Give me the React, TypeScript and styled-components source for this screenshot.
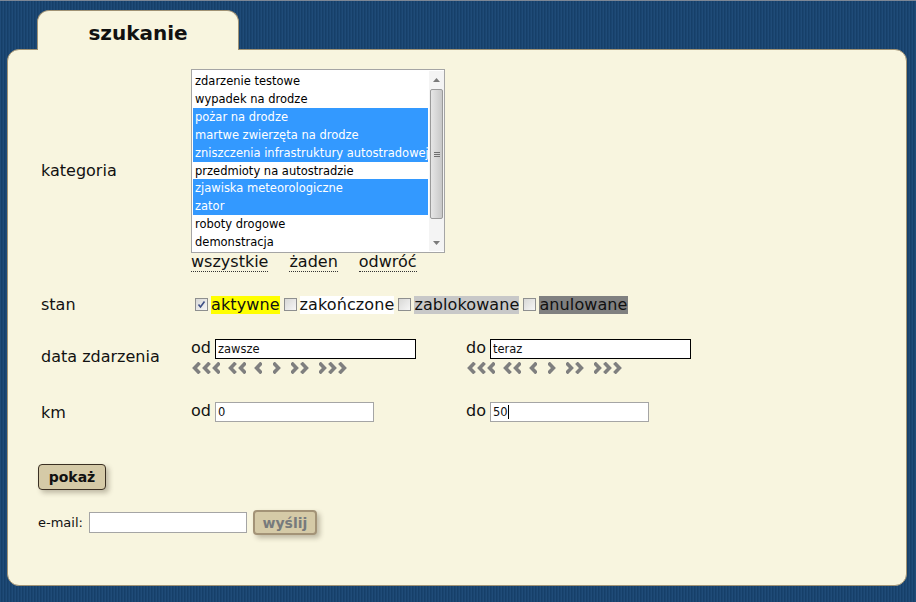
import React from 'react';
import styled, { createGlobalStyle } from 'styled-components';

const Global = createGlobalStyle`
  html, body { margin: 0; padding: 0; }
  body {
    width: 916px;
    height: 602px;
    overflow: hidden;
    background-color: #1a4570;
    background-image:
      linear-gradient(#7d8796, #7d8796),
      repeating-linear-gradient(90deg, #1f4b78 0px, #1f4b78 1px, #163f69 1px, #163f69 2px, #1a4570 2px, #1a4570 3px);
    background-size: 100% 1px, auto;
    background-repeat: no-repeat, repeat;
    font-family: "DejaVu Sans", Verdana, sans-serif;
    color: #111;
  }
`;

const Page = styled.div`
  padding: 10px 9px 0 7px;
`;

const Tab = styled.div`
  position: relative;
  z-index: 1;
  margin-left: 30px;
  margin-bottom: -1px;
  width: 200px;
  height: 39px;
  box-sizing: content-box;
  border: 1px solid #a09274;
  border-bottom: none;
  border-radius: 12px 12px 0 0;
  background: #f8f5df;
  text-align: center;
  font-weight: bold;
  font-size: 20px;
  line-height: 26px;
  & > span { display: block; padding-top: 9px; }
`;

const Panel = styled.div`
  width: 900px;
  height: 537px;
  box-sizing: border-box;
  border: 1px solid #a09274;
  border-radius: 12px;
  background: #f8f5df;
  display: flex;
  flex-direction: column;
  padding-top: 19px;
`;

const Row = styled.div<{ $mt: number }>`
  display: grid;
  grid-template-columns: 150px 1fr;
  align-items: center;
  padding-left: 33px;
  margin-top: ${p => p.$mt}px;
`;

const Label = styled.div`
  font-size: 16px;
  line-height: 19px;
`;

const Controls = styled.div`
  display: flex;
  flex-direction: column;
  align-items: flex-start;
`;

const ListBox = styled.div`
  width: 254px;
  height: 184px;
  box-sizing: border-box;
  border: 1px solid #a5a5a5;
  background: #fff;
  display: flex;
  padding: 1px 0 1px 1px;
`;

const Items = styled.div`
  width: 235px;
  display: flex;
  flex-direction: column;
  padding-top: 1px;
`;

const Item = styled.div<{ $sel?: boolean }>`
  height: 18px;
  line-height: 18px;
  font-size: 11.5px;
  padding-left: 2px;
  white-space: nowrap;
  overflow: hidden;
  background: ${p => (p.$sel ? '#3399ff' : 'transparent')};
  color: ${p => (p.$sel ? '#fff' : '#000')};
`;

const Scrollbar = styled.div`
  width: 17px;
  margin-left: 1px;
  display: flex;
  flex-direction: column;
  background: #f4f4f4;
`;

const ArrowBtn = styled.div`
  height: 17px;
  display: flex;
  align-items: center;
  justify-content: center;
`;

const Track = styled.div`
  flex: 1;
  display: flex;
  flex-direction: column;
  align-items: center;
  padding-top: 1px;
`;

const Thumb = styled.div`
  width: 13px;
  height: 130px;
  box-sizing: border-box;
  border: 1px solid #9a9a9a;
  border-radius: 2px;
  background: linear-gradient(90deg, #e6e6e6, #d4d4d4 60%, #c8c8c8);
  display: flex;
  align-items: center;
  justify-content: center;
`;

const Grip = styled.div`
  width: 6px;
  height: 5px;
  background: repeating-linear-gradient(180deg, #707070 0 1px, transparent 1px 2px);
`;

const Links = styled.div`
  display: flex;
  gap: 21px;
  font-size: 16px;
  line-height: 19px;
`;

const Link = styled.span`
  border-bottom: 1px dotted #333;
  line-height: 17px;
  height: 18px;
`;

const StanGroup = styled.div`
  display: flex;
  align-items: center;
  height: 18px;
`;

const Box = styled.span`
  width: 13px;
  height: 13px;
  box-sizing: border-box;
  border: 1px solid #8e8f8f;
  background: linear-gradient(135deg, #d8d8d6, #f6f6f6);
  margin: 0 3px 0 4px;
  display: inline-flex;
  align-items: center;
  justify-content: center;
`;

const StanLabel = styled.span<{ $bg: string }>`
  display: inline-block;
  height: 18px;
  line-height: 18px;
  font-size: 16px;
  letter-spacing: 0.1px;
  background: ${p => p.$bg};
`;

const Pair = styled.div`
  display: flex;
`;

const Group = styled.div`
  width: 275px;
  display: flex;
  flex-direction: column;
`;

const FieldLine = styled.div`
  display: flex;
  align-items: center;
  font-size: 16px;
`;

const Prefix = styled.span`
  width: 24px;
  line-height: 18px;
  margin-top: -2px;
`;

const TextBox = styled.div<{ $w: number; $dark?: boolean }>`
  width: ${p => p.$w}px;
  height: 20px;
  box-sizing: border-box;
  border: 1px solid ${p => (p.$dark ? '#000' : '#a5a5a5')};
  background: #fff;
  font-size: 11.5px;
  line-height: 18px;
  padding-left: 2px;
  display: flex;
  align-items: center;
`;

const Caret = styled.span`
  display: inline-block;
  width: 1px;
  height: 14px;
  background: #000;
`;

const ChevRow = styled.div`
  display: flex;
  margin-top: 3px;
  padding-left: 1px;
  height: 12px;
`;

const ChevWrap = styled.span<{ $ml: number }>`
  display: inline-flex;
  margin-left: ${p => p.$ml}px;
`;

const Actions = styled.div`
  padding-left: 30px;
  display: flex;
  flex-direction: column;
  align-items: flex-start;
`;

const Button = styled.button<{ $off?: boolean; $mt?: number }>`
  font-family: "DejaVu Sans", Verdana, sans-serif;
  font-weight: bold;
  font-size: 14px;
  height: ${p => (p.$off ? 25 : 26)}px;
  width: ${p => (p.$off ? 64 : 68)}px;
  margin-top: ${p => p.$mt ?? 0}px;
  padding: 0;
  box-sizing: border-box;
  border: ${p => (p.$off ? '2px solid #a39377' : '1px solid #3b3023')};
  border-radius: 4px;
  background: #d5caa7;
  color: ${p => (p.$off ? '#777a7c' : '#111')};
  box-shadow: 3px 3px 5px rgba(60, 50, 30, 0.3);
`;

const MailRow = styled.div`
  display: flex;
  align-items: center;
  margin-top: 20px;
`;

const MailLabel = styled.span`
  font-size: 13px;
  margin-right: 6px;
`;

const MailInput = styled.div`
  width: 158px;
  height: 21px;
  box-sizing: border-box;
  border: 1px solid #a5a5a5;
  background: #fff;
  margin-right: 6px;
`;

const Chev: React.FC<{ n: number; dir: 'l' | 'r' }> = ({ n, dir }) => {
  const w = 8 + (n - 1) * 10;
  const lines = [];
  for (let i = 0; i < n; i++) {
    const x = i * 10;
    const pts =
      dir === 'l'
        ? `${x + 7.6},0.8 ${x + 2.6},6 ${x + 7.6},11.2`
        : `${x + 0.4},0.8 ${x + 5.4},6 ${x + 0.4},11.2`;
    lines.push(
      <polyline key={i} points={pts} fill="none" stroke="#7f7f7f" strokeWidth={3.6} strokeLinejoin="miter" />
    );
  }
  return (
    <svg width={w} height={12} viewBox={`0 0 ${w} 12`}>
      {lines}
    </svg>
  );
};

const Chevrons = () => (
  <ChevRow>
    <ChevWrap $ml={0}><Chev n={3} dir="l" /></ChevWrap>
    <ChevWrap $ml={8}><Chev n={2} dir="l" /></ChevWrap>
    <ChevWrap $ml={8}><Chev n={1} dir="l" /></ChevWrap>
    <ChevWrap $ml={11}><Chev n={1} dir="r" /></ChevWrap>
    <ChevWrap $ml={10}><Chev n={2} dir="r" /></ChevWrap>
    <ChevWrap $ml={10}><Chev n={3} dir="r" /></ChevWrap>
  </ChevRow>
);

const categories: [string, boolean][] = [
  ['zdarzenie testowe', false],
  ['wypadek na drodze', false],
  ['pożar na drodze', true],
  ['martwe zwierzęta na drodze', true],
  ['zniszczenia infrastruktury autostradowej', true],
  ['przedmioty na autostradzie', false],
  ['zjawiska meteorologiczne', true],
  ['zator', true],
  ['roboty drogowe', false],
  ['demonstracja', false],
];

const states: [string, string, boolean][] = [
  ['aktywne', '#ffff00', true],
  ['zakończone', '#ffffff', false],
  ['zablokowane', '#c8c8c8', false],
  ['anulowane', '#808080', false],
];

export default function App() {
  return (
    <>
      <Global />
      <Page>
        <Tab><span>szukanie</span></Tab>
        <Panel>
          <Row $mt={0}>
            <Label>kategoria</Label>
            <Controls>
              <ListBox>
                <Items>
                  {categories.map(([t, s]) => (
                    <Item key={t} $sel={s}>{t}</Item>
                  ))}
                </Items>
                <Scrollbar>
                  <ArrowBtn>
                    <svg width="7" height="4" viewBox="0 0 7 4"><polygon points="0,4 3.5,0 7,4" fill="#7a7a7a" /></svg>
                  </ArrowBtn>
                  <Track>
                    <Thumb><Grip /></Thumb>
                  </Track>
                  <ArrowBtn>
                    <svg width="7" height="4" viewBox="0 0 7 4"><polygon points="0,0 3.5,4 7,0" fill="#7a7a7a" /></svg>
                  </ArrowBtn>
                </Scrollbar>
              </ListBox>
              <Links>
                <Link>wszystkie</Link>
                <Link>żaden</Link>
                <Link>odwróć</Link>
              </Links>
            </Controls>
          </Row>

          <Row $mt={23}>
            <Label>stan</Label>
            <StanGroup>
              {states.map(([t, bg, c]) => (
                <React.Fragment key={t}>
                  <Box>
                    {c && (
                      <svg width="9" height="9" viewBox="0 0 9 9">
                        <polyline points="1.5,4.5 3.5,7 7.5,1.5" fill="none" stroke="#3d4f86" strokeWidth={1.6} />
                      </svg>
                    )}
                  </Box>
                  <StanLabel $bg={bg}>{t}</StanLabel>
                </React.Fragment>
              ))}
            </StanGroup>
          </Row>

          <Row $mt={25}>
            <Label>data zdarzenia</Label>
            <Pair>
              <Group>
                <FieldLine>
                  <Prefix>od</Prefix>
                  <TextBox $w={201} $dark>zawsze</TextBox>
                </FieldLine>
                <Chevrons />
              </Group>
              <Group>
                <FieldLine>
                  <Prefix>do</Prefix>
                  <TextBox $w={201} $dark>teraz</TextBox>
                </FieldLine>
                <Chevrons />
              </Group>
            </Pair>
          </Row>

          <Row $mt={28}>
            <Label>km</Label>
            <Pair>
              <Group>
                <FieldLine>
                  <Prefix>od</Prefix>
                  <TextBox $w={159}>0</TextBox>
                </FieldLine>
              </Group>
              <Group>
                <FieldLine>
                  <Prefix>do</Prefix>
                  <TextBox $w={159}>50<Caret /></TextBox>
                </FieldLine>
              </Group>
            </Pair>
          </Row>

          <Actions>
            <Button $mt={42}>pokaż</Button>
            <MailRow>
              <MailLabel>e-mail:</MailLabel>
              <MailInput />
              <Button $off>wyślij</Button>
            </MailRow>
          </Actions>
        </Panel>
      </Page>
    </>
  );
}
